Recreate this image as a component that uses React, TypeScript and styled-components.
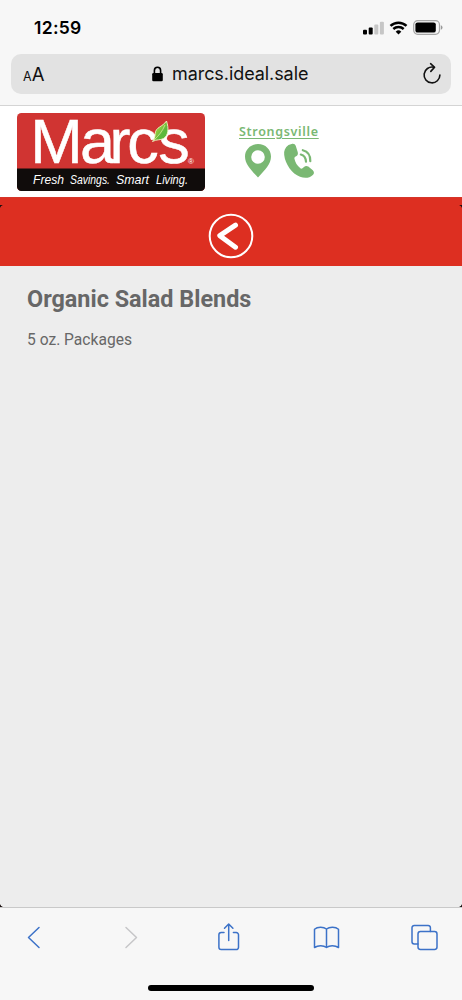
import React from "react";
import styled, { createGlobalStyle } from "styled-components";

const GlobalStyle = createGlobalStyle`
  * { box-sizing: border-box; }
  body { margin: 0; background: #f7f7f7; }
  svg { display: block; flex: none; overflow: visible; }
`;

const Screen = styled.div`
  width: 462px;
  height: 1000px;
  display: flex;
  flex-direction: column;
  overflow: hidden;
  background: #f7f7f7;
  font-family: Inter, "Liberation Sans", sans-serif;
`;

const BrowserTop = styled.header`
  height: 106px;
  flex: none;
  border-bottom: 1px solid #d4d4d4;
`;

const StatusBar = styled.div`
  height: 54px;
  padding: 2px 20px 0 34px;
  display: flex;
  align-items: center;
  justify-content: space-between;
`;

const Clock = styled.time`
  font-size: 17.5px;
  font-weight: 600;
  line-height: 20px;
  letter-spacing: 0.3px;
  color: #000;
`;

const StatusIcons = styled.div`
  display: flex;
  align-items: center;
  gap: 5px;
  padding-bottom: 1px;
`;

const AddressBar = styled.div`
  height: 40px;
  margin: 0 11px;
  padding: 0 9px 0 12px;
  border-radius: 10px;
  background: #e2e2e2;
  display: grid;
  grid-template-columns: 129px 1fr 20px;
  align-items: center;
  color: #111;
`;

const TextSize = styled.span`
  padding-top: 2px;
  font-size: 18.5px;
  line-height: 24px;
  small { font-size: 12.5px; }
`;

const Address = styled.div`
  display: flex;
  align-items: center;
  gap: 9px;
  font-size: 18px;
  line-height: 24px;
  letter-spacing: -0.07px;
`;

const StoreHeader = styled.div`
  height: 91px;
  flex: none;
  padding: 7px 17px 0;
  background: #fff;
  display: flex;
  align-items: flex-start;
`;

const StoreInfo = styled.div`
  margin: 10px 0 0 34px;
  display: flex;
  flex-direction: column;
`;

const StoreLink = styled.span`
  font: 600 12.5px/18px "Noto Sans", sans-serif;
  letter-spacing: 0.68px;
  color: #7ab873;
  text-decoration: underline;
  text-underline-offset: 2px;
`;

const ContactIcons = styled.div`
  display: flex;
  gap: 13px;
  margin: 3px 0 0 6px;
`;

const BackBar = styled.div`
  height: 69px;
  flex: none;
  padding-top: 7px;
  border-top: 1px solid #d5352a;
  background: #dd2f21;
  display: flex;
  align-items: center;
  justify-content: center;
  position: relative;
`;

const Corner = styled.i<{ $side: "left" | "right"; $bottom?: boolean }>`
  position: absolute;
  ${(p) => p.$side}: 0;
  ${(p) => (p.$bottom ? "bottom: 0" : "top: 7px")};
  width: 3px;
  height: 3px;
  background: radial-gradient(
    circle at ${(p) => (p.$side === "left" ? "100%" : "0%")} ${(p) => (p.$bottom ? "0%" : "100%")},
    transparent 2.4px,
    #1a1010 3px
  );
`;

const Content = styled.main`
  flex: 1;
  position: relative;
  padding: 19px 27px;
  background: #ededed;
  color: #676767;
  font-family: Roboto, sans-serif;
`;

const Title = styled.h1`
  margin: 0;
  font-size: 23.4px;
  line-height: 28px;
  font-weight: 700;
`;

const Detail = styled.p`
  margin: 17px 0 0;
  font-size: 15.6px;
  line-height: 20px;
`;

const BrowserBottom = styled.footer`
  height: 93px;
  flex: none;
  border-top: 1px solid #c9c9c9;
  display: flex;
  flex-direction: column;
  justify-content: space-between;
  align-items: center;
  padding-bottom: 9px;
`;

const Toolbar = styled.nav`
  width: 100%;
  height: 58px;
  padding: 0 24px 0 20px;
  display: flex;
  align-items: center;
  justify-content: space-between;
`;

const HomeIndicator = styled.div`
  width: 166px;
  height: 6px;
  border-radius: 3px;
  background: #000;
`;

const Signal = () => (
  <svg width="21" height="14" viewBox="0 0 21 14">
    <rect x="0" y="8.8" width="4" height="4.7" rx="1" fill="#000" />
    <rect x="5.7" y="6.6" width="4" height="6.9" rx="1" fill="#000" />
    <rect x="11.3" y="3.6" width="4" height="9.9" rx="1" fill="#c6c6c6" />
    <rect x="16.9" y="0.8" width="4" height="12.7" rx="1" fill="#c6c6c6" />
  </svg>
);

const Wifi = () => (
  <svg width="19" height="14" viewBox="0 0 19 14" fill="none" stroke="#000">
    <path d="M1.5 4.9a11.6 11.6 0 0 1 16 0" strokeWidth="2.5" />
    <path d="M4.3 8a7.6 7.6 0 0 1 10.4 0" strokeWidth="2.4" />
    <path d="M9.5 13.6 6.7 10.7a4 4 0 0 1 5.6 0Z" fill="#000" stroke="none" />
  </svg>
);

const Battery = () => (
  <svg width="29" height="15" viewBox="0 0 29 15">
    <rect x="0.7" y="0.7" width="25.8" height="13.6" rx="4" fill="none" stroke="#a6a6a6" strokeWidth="1.2" />
    <rect x="2.4" y="2.4" width="20.4" height="10.2" rx="2.2" fill="#000" />
    <path d="M27.8 5.2a2.4 2.4 0 0 1 0 4.6Z" fill="#999" />
  </svg>
);

const Lock = () => (
  <svg width="11" height="16" viewBox="0 0 11 16">
    <rect x="0.2" y="7" width="10.6" height="8.3" rx="1.3" fill="#000" />
    <path d="M2.4 8V4.6a3.1 3.3 0 0 1 6.2 0V8" fill="none" stroke="#000" strokeWidth="1.6" />
  </svg>
);

const Reload = () => (
  <svg width="20" height="22" viewBox="0 0 20 22" fill="none" stroke="#111" strokeWidth="1.6" strokeLinecap="round" strokeLinejoin="round">
    <path d="M11.6 4.2A7.9 7.9 0 1 0 17.9 12" />
    <path d="M8.600 0.700 12.600 4.300 8.800 8.400" />
  </svg>
);

const taglineWords = [
  { word: "Fresh", x: 16, width: 31 },
  { word: "Savings.", x: 53, width: 40 },
  { word: "Smart", x: 99, width: 33 },
  { word: "Living.", x: 139, width: 32 },
];

const Logo = () => (
  <svg width="188" height="78" viewBox="0 0 188 78">
    <defs>
      <clipPath id="badge"><rect width="188" height="78" rx="4.5" /></clipPath>
      <linearGradient id="leaf" x1="0" y1="0" x2="1" y2="1">
        <stop offset="0.42" stopColor="#8cc83e" />
        <stop offset="0.62" stopColor="#5cb83c" />
      </linearGradient>
    </defs>
    <g clipPath="url(#badge)">
      <rect width="188" height="78" fill="#d03432" />
      <rect y="55.5" width="188" height="22.5" fill="#100c0b" />
    </g>
    <g fill="#fff" fontFamily="Liberation Sans, Arial, sans-serif">
      <text x="13.2 63 92.5 110.2 141.3" y="49.6" fontSize="63" stroke="#fff" strokeWidth="0.5">Marcs</text>
      <text x="171" y="50.5" fontSize="8">®</text>
      {taglineWords.map(({ word, x, width }) => (
        <text key={word} x={x} y="70.5" fontSize="13" fontStyle="italic" textLength={width} lengthAdjust="spacingAndGlyphs">{word}</text>
      ))}
    </g>
    <path d="M135.500 28.500c1.500-2 2.500-4 2.700-8 .4-6.500 7.300-6.500 11.300-12.500 2.500 7.500 2 14.500-3 17.500-3.500 2-6.500.5-11 3Z" fill="url(#leaf)" stroke="#f3f3c4" strokeWidth="0.9" />
    <path d="M137 27c4.500-4 8.500-9 11-15" fill="none" stroke="#e3efad" strokeWidth="0.7" />
  </svg>
);

const Pin = () => (
  <svg width="26" height="34" viewBox="0 0 26 34">
    <path fillRule="evenodd" fill="#7ab873" d="M13 0C5.5 0 0 5.5 0 12.5 0 20 6 26 13 33.5 20 26 26 20 26 12.5 26 5.5 20.5 0 13 0Zm0 6.2a6.8 6.8 0 1 1 0 13.6 6.8 6.8 0 0 1 0-13.6Z" />
  </svg>
);

const Phone = () => (
  <svg width="31" height="34" viewBox="0 0 31 34">
    <path fill="#7ab873" d="M4.500 1C1 3.500-.3 7 .2 11c1 9 7.800 18.800 15.800 21.800 5 1.800 9.500 1.300 12.800-1.800 1.600-1.500 1.500-3.300 0-4.800l-4.500-3.600c-1.500-1-3-.9-4.300.3l-1.500 1.300c-.8.600-1.600.6-2.400-.1-3-2.500-4.800-5.600-5.600-9.100-.3-1.100.1-1.900 1.100-2.400l1-.6c1.300-.8 1.600-2.200 1.100-3.900L11.800 2C11.100 0 9.400-.5 7.600.1Z" />
    <path fill="none" stroke="#7ab873" strokeWidth="2.200" strokeLinecap="round" d="M18.800 6.200c5.200 1.300 7.700 5.300 7.500 11M16.800 10.500c3.400.9 5 3.600 5.200 7.200" />
  </svg>
);

const BackCircle = () => (
  <svg width="46" height="46" viewBox="0 0 46 46" fill="none" stroke="#fff">
    <circle cx="23" cy="23" r="21.3" strokeWidth="2" />
    <path d="M27.5 12.2 11.8 22.7 27.5 34.2" strokeWidth="5" strokeLinecap="round" strokeLinejoin="round" />
  </svg>
);

const ToolIcon = styled.svg`
  fill: none;
  stroke: ${(p) => p.color ?? "#3c72c8"};
  stroke-width: 1.5;
  stroke-linecap: round;
  stroke-linejoin: round;
`;

export default function App() {
  return (
    <>
      <GlobalStyle />
      <Screen>
        <BrowserTop>
          <StatusBar>
            <Clock>12:59</Clock>
            <StatusIcons>
              <Signal />
              <Wifi />
              <Battery />
            </StatusIcons>
          </StatusBar>
          <AddressBar>
            <TextSize><small>A</small>A</TextSize>
            <Address><Lock />marcs.ideal.sale</Address>
            <Reload />
          </AddressBar>
        </BrowserTop>
        <StoreHeader>
          <Logo />
          <StoreInfo>
            <StoreLink>Strongsville</StoreLink>
            <ContactIcons><Pin /><Phone /></ContactIcons>
          </StoreInfo>
        </StoreHeader>
        <BackBar>
          <Corner $side="left" />
          <Corner $side="right" />
          <BackCircle />
        </BackBar>
        <Content>
          <Title>Organic Salad Blends</Title>
          <Detail>5 oz. Packages</Detail>
          <Corner $side="left" $bottom />
          <Corner $side="right" $bottom />
        </Content>
        <BrowserBottom>
          <Toolbar>
            <ToolIcon width="28" height="28" viewBox="0 0 28 28"><path d="M19 4.500 8.500 14.500 19 24.500" /></ToolIcon>
            <ToolIcon width="28" height="28" viewBox="0 0 28 28" color="#c6c6c8"><path d="M8 4.500l10.500 10L8 24.500" /></ToolIcon>
            <ToolIcon width="28" height="28" viewBox="0 0 28 28">
              <path d="M9 9.500H6.200a2.300 2.300 0 0 0-2.300 2.300v12.500a2.300 2.300 0 0 0 2.300 2.300h15a2.300 2.300 0 0 0 2.300-2.300v-12.500a2.300 2.300 0 0 0-2.300-2.300H18.400M13.700 17.500V1.200M9.500 5.200 13.700 1l4.200 4.200" />
            </ToolIcon>
            <ToolIcon width="28" height="28" viewBox="0 0 28 28">
              <path d="M13.500 6v18M13.500 6C10.500 3.600 4.500 3.600 1.500 6.200V24.500c3.500-2.300 9-2.300 12 0 3-2.300 8.500-2.300 12 0V6.200C22.500 3.600 16.500 3.600 13.500 6Z" />
            </ToolIcon>
            <ToolIcon width="28" height="28" viewBox="0 0 28 28">
              <path d="M8 21H4.200a2.200 2.200 0 0 1-2.200-2.200V4.700A2.200 2.200 0 0 1 4.200 2.500h14a2.200 2.200 0 0 1 2.200 2.200V8.500" />
              <rect x="8" y="8.500" width="19" height="18" rx="2.400" />
            </ToolIcon>
          </Toolbar>
          <HomeIndicator />
        </BrowserBottom>
      </Screen>
    </>
  );
}
